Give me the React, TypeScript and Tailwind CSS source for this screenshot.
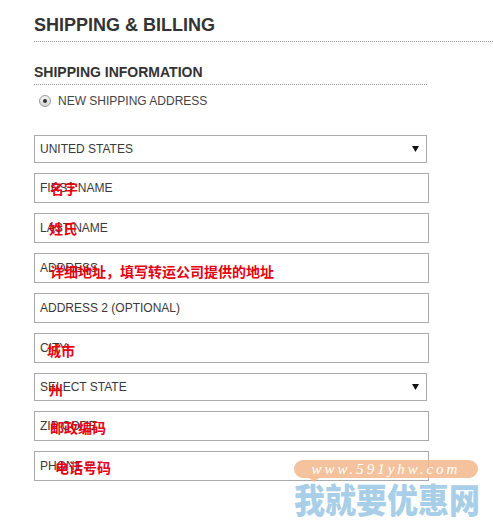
import React from 'react';

type Field = {
  label: string;
  select?: boolean;
  note?: string;
  noteLeft?: number;
  noteTop?: number;
};

const fields: Field[] = [
  { label: 'UNITED STATES', select: true },
  { label: 'FIRST NAME', note: '名字', noteLeft: 16, noteTop: 8 },
  { label: 'LAST NAME', note: '姓氏', noteLeft: 15, noteTop: 8 },
  { label: 'ADDRESS', note: '详细地址，填写转运公司提供的地址', noteLeft: 16, noteTop: 11 },
  { label: 'ADDRESS 2 (OPTIONAL)' },
  { label: 'CITY', note: '城市', noteLeft: 13, noteTop: 10 },
  { label: 'SELECT STATE', select: true, note: '州', noteLeft: 14, noteTop: 8 },
  { label: 'ZIP CODE', note: '邮政编码', noteLeft: 16, noteTop: 9 },
  { label: 'PHONE #', note: '电话号码', noteLeft: 21, noteTop: 9 },
];

function Note({ text, left, top }: { text: string; left: number; top: number }) {
  return (
    <span
      className="absolute pointer-events-none text-[14px] leading-[14px] font-bold text-[#e60012] whitespace-nowrap font-['Noto_Sans_CJK_SC',sans-serif]"
      style={{ left, top }}
    >
      {text}
    </span>
  );
}

function FormField({ f }: { f: Field }) {
  if (f.select) {
    return (
      <div className="relative w-[393px] h-[28px] border border-[#a9a9a9] bg-white flex items-center justify-between pl-[5px] pr-[7px] text-[12px] text-[#3a3a3a]">
        <span>{f.label}</span>
        <svg width="7" height="6" viewBox="0 0 7 6">
          <polygon points="0,0 7,0 3.5,6" fill="#111" />
        </svg>
        {f.note && <Note text={f.note} left={f.noteLeft!} top={f.noteTop!} />}
      </div>
    );
  }
  return (
    <div className="relative w-[395px] h-[30px]">
      <input
        placeholder={f.label}
        className="w-full h-full border border-[#a9a9a9] bg-white px-[5px] text-[12px] text-[#3a3a3a] placeholder:text-[#3a3a3a] outline-none"
      />
      {f.note && <Note text={f.note} left={f.noteLeft!} top={f.noteTop!} />}
    </div>
  );
}

export default function App() {
  return (
    <div className="relative w-full h-[523px] overflow-hidden bg-white font-['Liberation_Sans',Arial,sans-serif] text-[#333]">
      <div className="pl-[34px] pt-[16px]">
        {/* Header */}
        <h1 className="text-[18px] leading-[18px] font-bold pb-[7px] border-b border-dotted border-[#999]">
          SHIPPING &amp; BILLING
        </h1>

        {/* Shipping information */}
        <h2 className="mt-[23px] w-[393px] text-[14px] leading-[14px] font-bold pb-[5px] border-b border-dotted border-[#999]">
          SHIPPING INFORMATION
        </h2>

        <label className="mt-[10px] ml-[5px] flex items-center gap-[7px] text-[12px] leading-[12px] text-[#444]">
          <span className="w-[12px] h-[12px] rounded-full border border-[#9a9a9a] bg-gradient-to-b from-[#f4f4f4] to-[#d6d6d6] flex items-center justify-center">
            <span className="w-[4px] h-[4px] rounded-full bg-[#333]" />
          </span>
          NEW SHIPPING ADDRESS
        </label>

        <div className="mt-[28px] flex flex-col gap-[10px]">
          {fields.map(f => (
            <FormField key={f.label} f={f} />
          ))}
        </div>
      </div>

      {/* Watermark */}
      <div className="absolute left-[294px] top-[460px] w-[184px] pointer-events-none">
        <div className="relative h-[18px] rounded-full bg-[#f2b98c]/85 flex items-center justify-center">
          <span className="text-[15px] leading-[15px] italic text-white tracking-[3px] font-['Liberation_Serif',serif]">
            www.591yhw.com
          </span>
          <span className="absolute left-[14px] top-[17px] w-0 h-0 border-l-[6px] border-r-[6px] border-t-[5px] border-l-transparent border-r-transparent border-t-[#f2b98c]/85" />
        </div>
        <div className="mt-[2px] text-[31px] leading-[33px] font-black text-[#a9cfe8] whitespace-nowrap scale-y-110 origin-top font-['Noto_Sans_CJK_SC',sans-serif]">
          我就要优惠网
        </div>
      </div>
    </div>
  );
}
